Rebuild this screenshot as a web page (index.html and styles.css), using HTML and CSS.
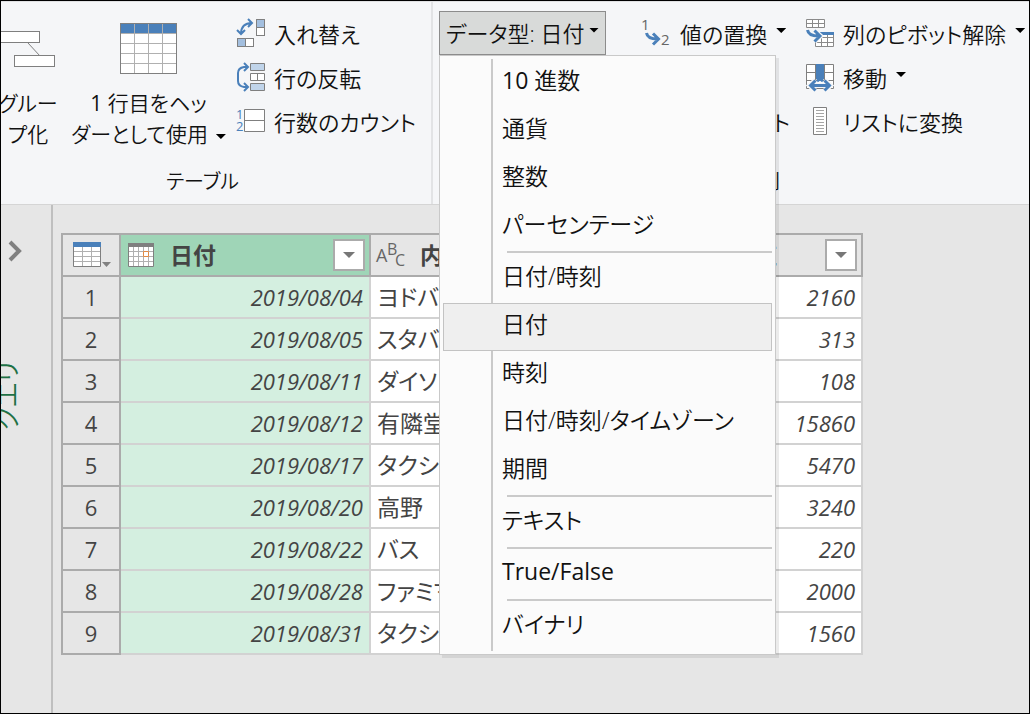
FILE: index.html
```html
<!DOCTYPE html>
<html lang="ja">
<head>
<meta charset="utf-8">
<title>日付</title>
<link rel="stylesheet" href="styles.css">
</head>
<body>
<div class="window">
  <header class="ribbon">
    <section class="group group-table">
      <div class="group-body">
        <button class="big big-group">
          <svg width="54" height="52" viewBox="0 0 54 52"><g fill="#fff" stroke="#7f7f7f"><path d="M27 20 39 33"/><rect x="-5.500" y="8.500" width="44" height="11"/><rect x="13.500" y="32.500" width="40" height="11"/></g></svg>
          <span class="big-text">グルー<br>プ化</span>
        </button>
        <button class="big big-header">
          <svg width="57" height="52" viewBox="0 0 57 52"><rect x=".5" y=".5" width="56" height="50" fill="#fff" stroke="#7f7f7f"/><path d="M1 1h55v9H1z" fill="#4a80ba"/><path d="M14.500 1v49M28.500 1v49M42.500 1v49M1 10.500h55M1 20.500h55M1 30.500h55M1 40.500h55" stroke="#b0b0b0"/></svg>
          <span class="big-text"><span class="latin">1</span> 行目をヘッ<br>ダーとして使用<i class="caret"></i></span>
        </button>
        <div class="stack">
          <button class="small">
            <svg width="28" height="28" viewBox="0 0 28 28"><g fill="none" stroke="#4a80ba" stroke-width="2"><path d="M4 15C4 8 8 4 15 4M11 0l4 4-4 4M0 11l4 4 4-4"/></g><g fill="#fff" stroke="#7f7f7f"><rect x="19.500" y=".5" width="8" height="16"/><rect x=".5" y="19.500" width="16" height="8"/><path d="M19.500.500h8v8h-8zM.5 19.500h8v8h-8z" fill="#a3bfdf"/></g></svg>
            <span>入れ替え</span>
          </button>
          <button class="small">
            <svg width="28" height="28" viewBox="0 0 28 28"><g fill="none" stroke="#4a80ba" stroke-width="2"><path d="M11 4H7Q1 5 1 10v8q0 5 6 6h4M7 0l4 4-4 4M7 20l4 4-4 4"/></g><g stroke="#7f7f7f"><path d="M13.500.500h14v7h-14zM13.500 20.500h14v7h-14z" fill="#c0d4ea"/><path d="M13.500 10.500h14v7h-14zM20.500 10v8" fill="#fff"/></g></svg>
            <span>行の反転</span>
          </button>
          <button class="small">
            <svg width="28" height="28" viewBox="0 0 28 28"><text x="-1" y="12" class="svg-digit blue">1</text><text x="-1" y="24" class="svg-digit blue">2</text><path d="M7.500 2.500h20v22h-20zM7.500 13.500h20" fill="#fff" stroke="#7f7f7f"/></svg>
            <span>行数のカウント</span>
          </button>
        </div>
      </div>
      <div class="group-name">テーブル</div>
    </section>
    <section class="group group-column">
      <div class="group-body">
        <div class="type-picker">
          <button class="type-button" aria-haspopup="menu" aria-expanded="true">データ型: 日付<i class="caret"></i></button>
          <ul class="menu" role="menu">
            <li><button role="menuitem"><span class="latin">10</span> 進数</button></li>
            <li><button role="menuitem">通貨</button></li>
            <li><button role="menuitem">整数</button></li>
            <li><button role="menuitem">パーセンテージ</button></li>
            <li class="rule" role="separator"></li>
            <li><button role="menuitem">日付/時刻</button></li>
            <li><button role="menuitem" class="selected">日付</button></li>
            <li><button role="menuitem">時刻</button></li>
            <li><button role="menuitem">日付/時刻/タイムゾーン</button></li>
            <li><button role="menuitem">期間</button></li>
            <li class="rule" role="separator"></li>
            <li><button role="menuitem">テキスト</button></li>
            <li class="rule" role="separator"></li>
            <li><button role="menuitem"><span class="latin">True/False</span></button></li>
            <li class="rule" role="separator"></li>
            <li><button role="menuitem">バイナリ</button></li>
          </ul>
        </div>
        <div class="stack stack-replace">
          <button class="small">
            <svg width="30" height="28" viewBox="0 0 30 28"><text x="0" y="11" class="svg-digit large">1</text><text x="20" y="26" class="svg-digit large">2</text><path d="M5.500 14q1 6 11 6M12 14.500l5.500 5.500-5.500 5.500" fill="none" stroke="#4a80ba" stroke-width="3"/></svg>
            <span>値の置換</span><i class="caret"></i>
          </button>
          <button class="small covered">ト</button>
        </div>
        <div class="stack">
          <button class="small">
            <svg width="28" height="28" viewBox="0 0 28 28"><g fill="#fff" stroke="#8a8a8a"><path d="M.5.500h18v8H.5zM.5 4.500h18M6.500.500v8M12.500.500v8M9.500 14.500h18v13h-18zM9.500 18.500h18M9.500 23.500h18M15.500 14v13M21.500 14v13"/></g><path d="M13 13h15v3H13z" fill="#4a80ba"/><path d="M1 11q1 6 12 6M8.500 11.500l6 5.500-6 5.500" fill="none" stroke="#f5f6f8" stroke-width="5"/><path d="M1.500 11q1 6 11 6M8.500 11.500l5.500 5.500-5.500 5.500" fill="none" stroke="#4a80ba" stroke-width="3"/></svg>
            <span>列のピボット解除</span><i class="caret"></i>
          </button>
          <button class="small">
            <svg width="28" height="28" viewBox="0 0 28 28"><path d="M.5 1.500h27v24H.5zM.5 9.500h27M.5 17.500h27M9.500 1.500v24M18.500 1.500v24" fill="#fff" stroke="#7f7f7f"/><path d="M10 1h8v15h-8z" fill="#4a80ba"/><path d="M3 22.500h22M9.500 17l-6 5.500 6 5.500M18.500 17l6 5.500-6 5.500" fill="none" stroke="#f5f6f8" stroke-width="5"/><path d="M4 22.500h20M9.500 17.500l-5 5 5 5M18.500 17.500l5 5-5 5M11 18l3-2 3 2" fill="none" stroke="#4a80ba" stroke-width="3"/></svg>
            <span>移動</span><i class="caret"></i>
          </button>
          <button class="small">
            <svg width="28" height="28" viewBox="0 0 28 28"><path d="M7.500.500h13v27h-13z" fill="#fff" stroke="#7f7f7f"/><path d="M10 3.500h8M10 6.500h8M10 9.500h8M10 12.500h8M10 15.500h8M10 18.500h8M10 21.500h8M10 24.500h8" stroke="#a5a5a5"/></svg>
            <span>リストに変換</span>
          </button>
        </div>
      </div>
      <div class="group-name">列</div>
    </section>
  </header>
  <main class="workspace">
    <aside class="rail">
      <button class="expand" aria-label="クエリ"><svg width="15" height="22" viewBox="0 0 15 22"><path d="M3 2l9 9-9 9" fill="none" stroke="#808080" stroke-width="4"/></svg></button>
      <div class="rail-name">クエリ</div>
    </aside>
    <div class="preview">
      <table class="data">
        <colgroup><col class="c-num"><col class="c-date"><col class="c-text"><col class="c-value"></colgroup>
        <thead>
          <tr>
            <th class="corner"><svg width="39" height="26" viewBox="0 0 39 26"><path d="M.5.500h27v24H.5z" fill="#fff" stroke="#7f7f7f"/><path d="M9.500 5v19M18.500 5v19M1 9.500h26M1 14.500h26M1 19.500h26" stroke="#b0b0b0"/><path d="M0 0h28v5H0z" fill="#4a80ba"/><path d="M29 20h9l-4.500 5z" fill="#808080"/></svg></th>
            <th class="active"><div class="head">
              <svg width="27" height="25" viewBox="0 0 27 25"><path d="M.5.500h25v23H.5z" fill="#fff" stroke="#7f7f7f"/><path d="M5.500 4v19M10.500 4v19M15.500 4v19M20.500 4v19M1 8.500h24M1 13.500h24M1 18.500h24" stroke="#b0b0b0"/><path d="M0 0h26v4H0z" fill="#7f7f7f"/><path d="M15.500 8.500h5v5h-5z" fill="#fff" stroke="#e08a45"/></svg>
              <span class="title">日付</span><button class="filter" aria-label="日付"><i></i></button></div></th>
            <th><div class="head text-head">
              <svg width="28" height="25" viewBox="0 0 28 25"><g class="svg-abc"><text x="-1" y="19" class="svg-a">A</text><text x="10" y="12">B</text><text x="18" y="23">C</text></g></svg>
              <span class="title">内</span></div></th>
            <th><div class="head plain"><span class="title">値</span><button class="filter" aria-label="値"><i></i></button></div></th>
          </tr>
        </thead>
        <tbody>
          <tr><th>1</th><td>2019/08/04</td><td>ヨドバシ</td><td>2160</td></tr>
          <tr><th>2</th><td>2019/08/05</td><td>スタバ</td><td>313</td></tr>
          <tr><th>3</th><td>2019/08/11</td><td>ダイソ</td><td>108</td></tr>
          <tr><th>4</th><td>2019/08/12</td><td>有隣堂</td><td>15860</td></tr>
          <tr><th>5</th><td>2019/08/17</td><td>タクシー</td><td>5470</td></tr>
          <tr><th>6</th><td>2019/08/20</td><td>高野</td><td>3240</td></tr>
          <tr><th>7</th><td>2019/08/22</td><td>バス</td><td>220</td></tr>
          <tr><th>8</th><td>2019/08/28</td><td>ファミマ</td><td>2000</td></tr>
          <tr><th>9</th><td>2019/08/31</td><td>タクシー</td><td>1560</td></tr>
        </tbody>
      </table>
    </div>
  </main>
</div>
</body>
</html>
```

FILE: styles.css
```css
* { box-sizing: border-box; }
body {
  margin: 0;
  font-family: "Open Sans", "Noto Sans CJK JP", sans-serif;
  font-size: 23px;
  font-feature-settings: "palt";
  color: #1a1a1a;
}
button {
  font: inherit;
  font-feature-settings: inherit;
  color: inherit;
  background: none;
  border: 0;
  padding: 0;
  margin: 0;
  white-space: nowrap;
}
svg { display: block; flex: none; overflow: visible; }
.window {
  min-height: 100vh;
  display: flex;
  flex-direction: column;
  border: 1px solid #000;
  overflow: hidden;
}

/* Ribbon */
.ribbon {
  display: flex;
  background: #f5f6f8;
  border-top: 1px solid #e0e1e3;
  border-bottom: 1px solid #d5d5d5;
  font-size: 22px;
  font-weight: 350;
  color: #111;
}
.latin { font-weight: 400; }
.group { padding: 9px 0 6px; }
.group-table { flex: none; width: 432px; border-right: 2px solid #e2e3e5; }
.group-column { flex: 1; min-width: 0; padding-left: 5px; }
.group-body { display: flex; height: 154px; }
.group-name { height: 33px; line-height: 33px; font-size: 20px; }
.group-table .group-name { padding-left: 165px; }
.group-column .group-name { padding-left: 322px; }
.big {
  display: flex;
  flex-direction: column;
  align-items: center;
  padding-top: 12px;
  flex: none;
}
.big-group { width: 54px; }
.big-header { width: 181px; padding-left: 6px; }
.big-text { line-height: 31px; margin-top: 13px; font-size: 21px; }
.big-header .caret { margin-left: 8px; }
.caret {
  display: inline-block;
  flex: none;
  width: 10px;
  height: 5px;
  background: #000;
  clip-path: polygon(0 0, 100% 0, 50% 100%);
  vertical-align: middle;
}
.stack { display: flex; flex-direction: column; flex: none; }
.small { display: flex; align-items: center; height: 44px; gap: 9px; padding-bottom: 1px; }
.small .caret, .type-button .caret { margin-bottom: 4px; }
.small svg { margin-left: 1px; }
.type-picker { position: relative; flex: none; width: 169px; padding-left: 1px; }
.type-button {
  display: flex;
  align-items: center;
  justify-content: space-between;
  width: 167px;
  height: 44px;
  padding: 0 6px 2px;
  background: #d8dad9;
  border: 1px solid #8c8c8c;
}
.stack-replace { width: 198px; padding-left: 33px; }
.stack-replace .covered { margin: 44px 15px 0 auto; }
.svg-digit { font-size: 13px; font-weight: 400; fill: #666; }
.svg-digit.blue { fill: #4a80ba; }
.svg-digit.large { font-size: 15px; }

/* Data type menu */
.menu {
  position: absolute;
  z-index: 2;
  top: 44px;
  left: 1px;
  width: 337px;
  margin: 0;
  padding: 3px;
  list-style: none;
  font-size: 23px;
  background: linear-gradient(90deg, transparent 48px, #cacaca 48px, #cacaca 50px, transparent 50px) 3px 3px / 100% calc(100% - 6px) no-repeat #fbfbfb;
  border: 1px solid #c9c9c9;
  box-shadow: 3px 3px 0 rgba(0, 0, 0, 0.08);
}
.menu button {
  display: block;
  width: 329px;
  height: 48px;
  padding: 0 0 8px 58px;
  border: 1px solid transparent;
  text-align: left;
}
.menu .selected { background: #efefef; border-color: #c3c3c3; }
.rule { height: 4px; margin-left: 64px; border-top: 2px solid #cacaca; }

/* Workspace */
.workspace { flex: 1; display: flex; background: #e6e6e6; }
.rail { flex: none; width: 52px; border-right: 2px solid #bfbfbf; overflow: hidden; }
.expand { display: block; margin: 35px 0 0 6px; }
.rail-name {
  width: 30px;
  margin: 99px 0 0 -9px;
  line-height: 30px;
  font-size: 26px;
  font-weight: 350;
  writing-mode: vertical-rl;
  text-orientation: sideways;
  transform: rotate(180deg);
  color: #1e7145;
}
.preview { flex: 1; padding: 28px 0 0 8px; }
.data {
  table-layout: fixed;
  width: 802px;
  border-collapse: separate;
  border-spacing: 0;
  border-top: 2px solid #ababab;
  border-left: 2px solid #ababab;
  color: #444;
  line-height: 30px;
}
.c-num { width: 58px; }
.c-date { width: 250px; }
.c-text { width: 337px; }
.data th, .data td { height: 42px; padding: 0 6px; border-right: 2px solid #d2d2d2; border-bottom: 2px solid #d2d2d2; white-space: nowrap; }
.data th { padding: 0; background: #e6e6e6; border-color: #ababab; font-weight: 400; font-size: 22px; }
.data td { background: #fff; text-align: right; font-style: italic; font-size: 22px; }
.data td:nth-child(2) { background: #d4efe0; }
.data td:nth-child(3) { text-align: left; font-style: normal; font-size: 23px; }
.data .active { background: #9fd5b7; }
.corner svg { margin-left: 10px; }
.head { display: flex; align-items: center; height: 40px; padding: 0 4px 0 7px; }
.head.plain { padding-left: 46px; }
.head.text-head { padding-left: 6px; }
.title { font-size: 23px; font-weight: 700; }
.head svg + .title { margin-left: 15px; }
.filter {
  display: grid;
  place-items: center;
  width: 32px;
  height: 32px;
  margin-left: auto;
  background: #fff;
  border: 2px solid #ababab;
}
.filter i { width: 12px; height: 6px; background: #777; clip-path: polygon(0 0, 100% 0, 50% 100%); }
.svg-abc { font-size: 16px; fill: #666; font-weight: 500; }
.svg-a { font-size: 18px; }
```
